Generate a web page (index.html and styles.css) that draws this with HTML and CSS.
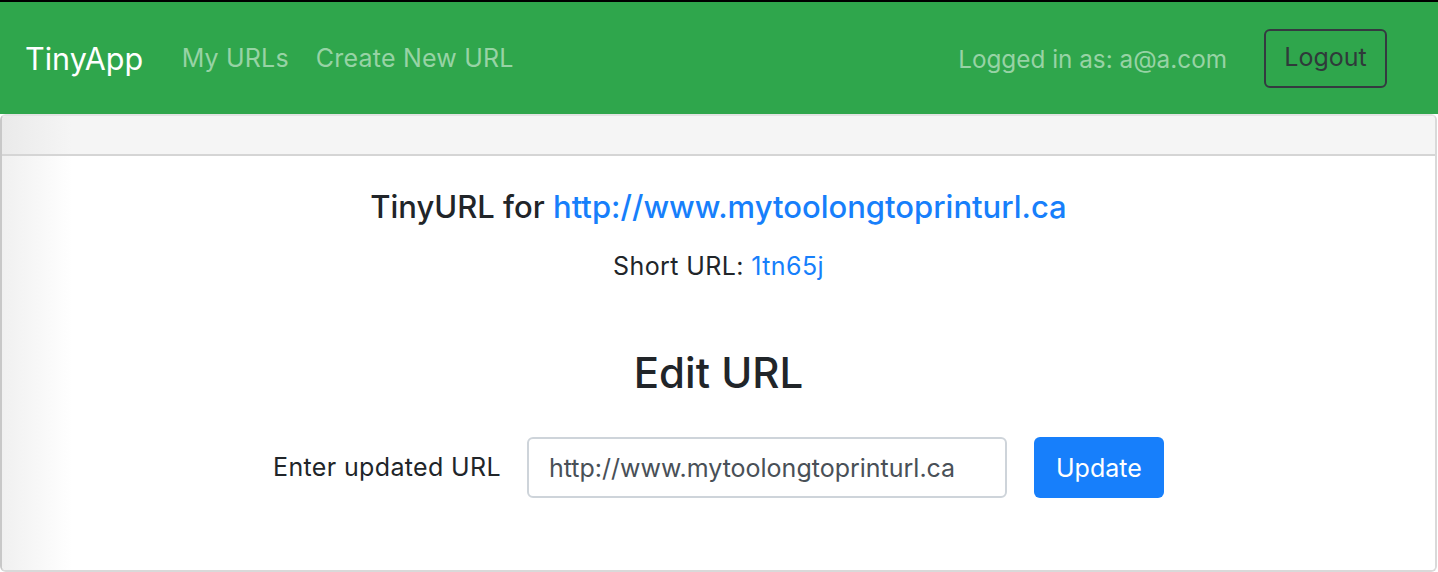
FILE: index.html
```html
<!DOCTYPE html>
<html lang="en">
<head>
<meta charset="utf-8">
<title>TinyApp - Edit URL</title>
<link rel="stylesheet" href="styles.css">
</head>
<body>
<nav class="navbar">
  <a class="brand" href="#">TinyApp</a>
  <div class="nav-links">
    <a class="nav-link" href="#">My URLs</a>
    <a class="nav-link" href="#">Create New URL</a>
  </div>
  <div class="nav-right">
    <span class="logged">Logged in as: a@a.com</span>
    <button class="btn-logout" type="button">Logout</button>
  </div>
</nav>
<main class="card">
  <div class="card-header"></div>
  <div class="card-body">
    <h5 class="title">TinyURL for <a href="#">http://www.mytoolongtoprinturl.ca</a></h5>
    <p class="short">Short URL: <a href="#">1tn65j</a></p>
    <h3 class="edit-title">Edit URL</h3>
    <form class="edit-form">
      <label class="edit-label" for="newurl">Enter updated URL</label>
      <input class="edit-input" id="newurl" type="text" value="http://www.mytoolongtoprinturl.ca">
      <button class="btn-update" type="button">Update</button>
    </form>
  </div>
</main>
</body>
</html>
```
FILE: styles.css
```css
* { box-sizing: border-box; }
html, body { margin: 0; padding: 0; }
body {
  font-family: Inter, "Noto Sans", "Liberation Sans", sans-serif;
  color: #212529;
  background: #ffffff;
  border-top: 2px solid #000;
  font-size: 25px;
  line-height: 1.5;
}
a { text-decoration: none; }

.navbar {
  display: flex;
  align-items: center;
  height: 112px;
  padding: 0 51px 0 25px;
  background: #2fa64c;
}
.brand {
  font-size: 30.5px;
  color: #ffffff;
  margin-right: 25px;
  line-height: 1;
  padding-top: 2px;
}
.nav-links { display: flex; padding-top: 2px; }
.nav-link {
  padding: 0 13.5px;
  color: #97d3a5;
  letter-spacing: 0.2px;
}
.nav-right {
  margin-left: auto;
  display: flex;
  align-items: center;
  gap: 37px;
}
.logged { color: #97d3a5; font-size: 24.3px; padding-top: 2px; }
.btn-logout {
  font-family: inherit;
  font-size: 25px;
  line-height: 1.5;
  color: #2f3a3a;
  background: transparent;
  border: 2px solid #343a40;
  border-radius: 6px;
  width: 123px;
  height: 59px;
  padding: 0;
}

.card {
  display: flex;
  flex-direction: column;
  border: 2px solid #d9d9d9;
  border-top-color: #e3e3e3;
  border-left-color: #c8c8c8;
  border-radius: 6px;
  width: 1437px;
  overflow: hidden;
}
.card-header {
  height: 40px;
  background: linear-gradient(to right, #eaeaea 0, #f5f5f5 70px);
  border-bottom: 2px solid #d5d5d5;
}
.card-body {
  background: linear-gradient(to right, #f0f0f0 0, #ffffff 70px);
  text-align: center;
  padding: 32px 30px 72px;
}
.title {
  margin: 0;
  font-size: 31px;
  font-weight: 500;
  line-height: 1.2;
}
.title a, .short a { color: #177ffb; }
.short {
  margin: 23px 0 0;
  letter-spacing: 0.4px;
}
.edit-title {
  margin: 62px 0 0;
  font-size: 42px;
  font-weight: 500;
  line-height: 1.2;
}
.edit-form {
  margin-top: 39px;
  display: flex;
  justify-content: center;
  align-items: center;
}
.edit-label {
  margin-right: 26px;
  letter-spacing: 0.35px;
}
.edit-input {
  font-family: inherit;
  font-size: 25px;
  color: #495057;
  width: 480px;
  height: 61px;
  padding: 0 20px;
  border: 2px solid #ced4da;
  border-radius: 6px;
  background: #fff;
}
.btn-update {
  margin-left: 27px;
  font-family: inherit;
  font-size: 25px;
  color: #fff;
  background: #177ffb;
  border: none;
  border-radius: 6px;
  width: 130px;
  height: 61px;
  padding: 0;
}
```
